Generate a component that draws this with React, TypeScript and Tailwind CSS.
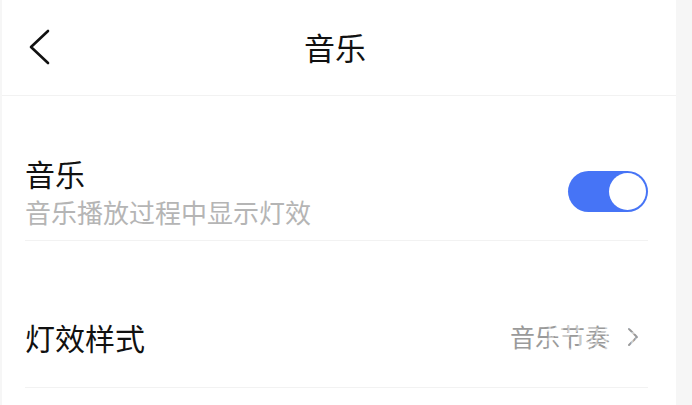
import React from 'react';

const font = { fontFamily: '"Noto Sans CJK SC", "Noto Sans", sans-serif' };

const Toggle: React.FC<{ on: boolean }> = ({ on }) => (
  <div
    className={`w-[80px] h-[41px] rounded-full flex items-center px-[2px] ${
      on ? 'bg-[#4674f6] justify-end' : 'bg-[#dddddd] justify-start'
    }`}
  >
    <div className="w-[37px] h-[37px] rounded-full bg-white" />
  </div>
);

export default function App() {
  return (
    <div className="w-[692px] h-[405px] bg-[#f6f6f6] flex overflow-hidden" style={font}>
      <div className="ml-[2px] w-[674px] bg-white flex flex-col relative">
        {/* Header */}
        <div className="h-[96px] flex items-center relative border-b border-[#f2f2f2]">
          <svg className="absolute left-[25px] top-[29px]" width="24" height="36" viewBox="0 0 24 36" fill="none">
            <path d="M21 2 L4 18 L21 34" stroke="#111" strokeWidth="2.6" strokeLinecap="round" strokeLinejoin="round" />
          </svg>
          <div className="flex-1 text-center text-[31px] text-[#111] leading-none pr-[8px] pb-[2px]">音乐</div>
        </div>

        {/* Rows */}
        <div className="pl-[23px] pr-[28px] pt-[56px]">
          <div className="flex items-center justify-between border-b border-[#f2f2f2] h-[89px] pb-[9px]">
            <div className="flex flex-col gap-[11px]">
              <span className="text-[30px] leading-none text-[#111]">音乐</span>
              <span className="text-[26px] leading-none text-[#b5b5b5]">音乐播放过程中显示灯效</span>
            </div>
            <Toggle on />
          </div>

          <div className="flex items-center justify-between border-b border-[#f2f2f2] h-[147px] pt-[46px]">
            <span className="text-[30px] text-[#111]">灯效样式</span>
            <div className="flex items-center gap-[17px] text-[#9a9a9a] pr-[9px]">
              <span className="text-[25px]">音乐节奏</span>
              <svg width="12" height="20" viewBox="0 0 12 20" fill="none">
                <path d="M2 2 L10 10 L2 18" stroke="#9a9a9a" strokeWidth="2" strokeLinecap="round" strokeLinejoin="round" />
              </svg>
            </div>
          </div>
        </div>

        {/* watermark */}
        <div className="absolute left-[512px] top-[322px] flex flex-col items-end text-white/50 pointer-events-none">
          <span className="text-[28px] leading-none pl-[30px]">搜狗指南</span>
          <span className="text-[14px] leading-none mt-[10px]">zhinan.sogou.com</span>
        </div>
      </div>
    </div>
  );
}
